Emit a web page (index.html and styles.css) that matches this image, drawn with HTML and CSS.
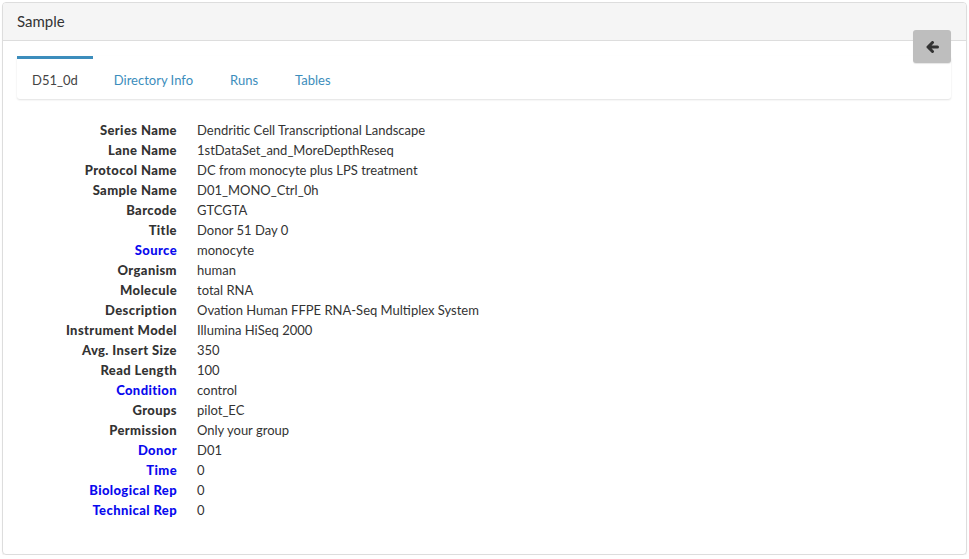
FILE: index.html
```html
<!DOCTYPE html>
<html>
<head>
<meta charset="utf-8">
<link rel="stylesheet" href="styles.css">
</head>
<body>
<div class="panel">
  <div class="panel-heading">Sample</div>
  <button class="back-btn" aria-label="Back">
    <svg width="14" height="12" viewBox="0 0 14 12"><path d="M12.5 6H3M7.5 1.5L3 6l4.5 4.5" fill="none" stroke="#333" stroke-width="3" stroke-linecap="round" stroke-linejoin="round"/></svg>
  </button>
  <div class="panel-body">
    <div class="tabs">
      <ul class="tab-list">
        <li class="tab active">D51_0d</li>
        <li class="tab">Directory Info</li>
        <li class="tab">Runs</li>
        <li class="tab">Tables</li>
      </ul>
    </div>
    <dl class="details">
      <dt>Series Name</dt><dd>Dendritic Cell Transcriptional Landscape</dd>
      <dt>Lane Name</dt><dd>1stDataSet_and_MoreDepthReseq</dd>
      <dt>Protocol Name</dt><dd>DC from monocyte plus LPS treatment</dd>
      <dt>Sample Name</dt><dd>D01_MONO_Ctrl_0h</dd>
      <dt>Barcode</dt><dd>GTCGTA</dd>
      <dt>Title</dt><dd>Donor 51 Day 0</dd>
      <dt class="link">Source</dt><dd>monocyte</dd>
      <dt>Organism</dt><dd>human</dd>
      <dt>Molecule</dt><dd>total RNA</dd>
      <dt>Description</dt><dd>Ovation Human FFPE RNA-Seq Multiplex System</dd>
      <dt>Instrument Model</dt><dd>Illumina HiSeq 2000</dd>
      <dt>Avg. Insert Size</dt><dd>350</dd>
      <dt>Read Length</dt><dd>100</dd>
      <dt class="link">Condition</dt><dd>control</dd>
      <dt>Groups</dt><dd>pilot_EC</dd>
      <dt>Permission</dt><dd>Only your group</dd>
      <dt class="link">Donor</dt><dd>D01</dd>
      <dt class="link">Time</dt><dd>0</dd>
      <dt class="link">Biological Rep</dt><dd>0</dd>
      <dt class="link">Technical Rep</dt><dd>0</dd>
    </dl>
  </div>
</div>
</body>
</html>
```
FILE: styles.css
```css
html, body {
  margin: 0;
  padding: 0;
  background: #fff;
}
body {
  padding: 2px 2px 0 2px;
  font-family: Lato, "Noto Sans", sans-serif;
  font-size: 13px;
  color: #333;
}
.panel {
  position: relative;
  border: 1px solid #ddd;
  border-radius: 4px;
  box-shadow: 0 1px 1px rgba(0,0,0,0.08);
  height: 553px;
  box-sizing: border-box;
}
.panel-heading {
  height: 37px;
  line-height: 37px;
  padding: 0 14px;
  background: #f5f5f5;
  border-bottom: 1px solid #ddd;
  border-radius: 3px 3px 0 0;
  font-size: 15px;
  color: #333;
}
.back-btn {
  position: absolute;
  top: 27px;
  right: 15px;
  width: 38px;
  height: 33px;
  border: none;
  border-radius: 3px;
  background: #bebebe;
  box-shadow: 0 1px 1px rgba(0,0,0,0.1);
  display: flex;
  align-items: center;
  justify-content: center;
  padding: 0;
}
.panel-body {
  padding: 15px 15px 15px 14px;
}
.tabs {
  background: #fff;
  border-radius: 3px;
  box-shadow: 0 1px 2px rgba(0,0,0,0.12);
}
.tab-list {
  list-style: none;
  margin: 0;
  padding: 0;
  display: flex;
}
.tab {
  margin-right: 5px;
  padding: 2px 16px 0 16px;
  height: 38px;
  line-height: 38px;
  border-top: 3px solid transparent;
  color: #3c8dbc;
  font-size: 13px;
}
.tab.active {
  border-top-color: #3c8dbc;
  color: #444;
  padding-left: 15px;
  padding-right: 15px;
}
.details {
  margin: 21px 0 0 0;
  display: grid;
  grid-template-columns: 160px 1fr;
  column-gap: 20px;
  line-height: 20px;
}
.details dt {
  text-align: right;
  font-weight: 900;
  letter-spacing: 0.4px;
  color: #333;
}
.details dt.link {
  color: #0a0aee;
}
.details dd {
  margin: 0;
  color: #333;
}
```
